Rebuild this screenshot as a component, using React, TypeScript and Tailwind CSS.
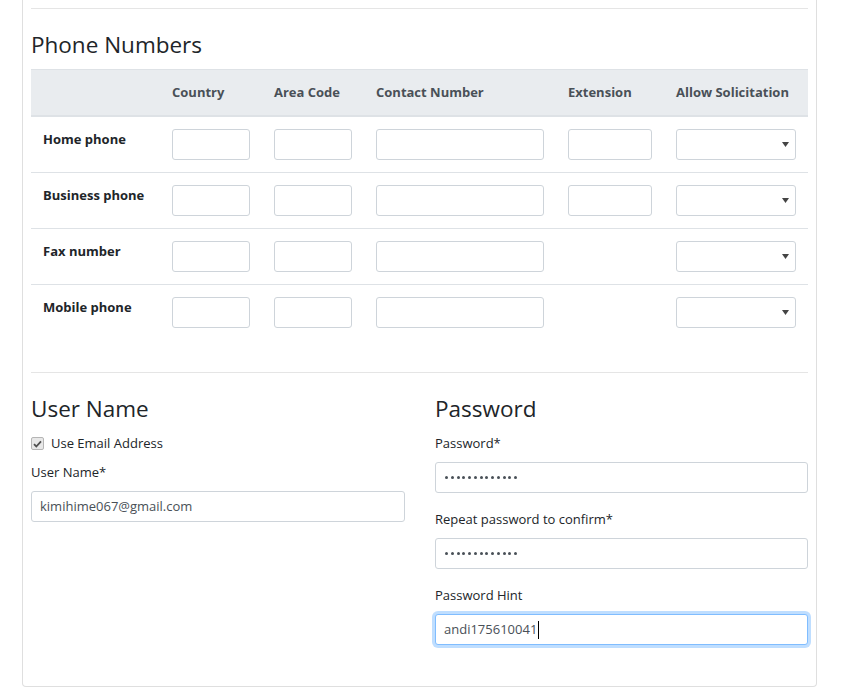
import React from "react";

const FONT = "font-['Open_Sans','Noto_Sans',sans-serif]";

const COLS = "grid grid-cols-[129px_102px_102px_192px_108px_144px]";

const ROWS = [
  { label: "Home phone", ext: true },
  { label: "Business phone", ext: true },
  { label: "Fax number", ext: false },
  { label: "Mobile phone", ext: false },
];

function Box({ className = "" }: { className?: string }) {
  return <div className={`h-[31px] rounded-[3px] border border-[#ced4da] bg-white ${className}`} />;
}

function Select() {
  return (
    <div className="flex h-[31px] w-[120px] items-center justify-end rounded-[3px] border border-[#ced4da] bg-white pr-[6px]">
      <svg width="7" height="5" viewBox="0 0 7 5">
        <path d="M0 0h7L3.5 5z" fill="#444" />
      </svg>
    </div>
  );
}

function Dots() {
  return (
    <div className="flex h-[31px] items-center gap-[2.75px] rounded-[3px] border border-[#ced4da] bg-white px-[9px]">
      {Array.from({ length: 13 }).map((_, i) => (
        <span key={i} className="h-[3px] w-[3px] rounded-full bg-[#495057]" />
      ))}
    </div>
  );
}

function Label({ children }: { children: React.ReactNode }) {
  return <div className="mb-2 h-[21px] leading-[21px] text-[#212529]">{children}</div>;
}

export default function App() {
  return (
    <div className={`min-h-[692px] bg-white text-[13px] ${FONT}`}>
      <div className="ml-[22px] w-[795px] rounded-b border border-t-0 border-[#dfdfdf] px-2 pt-2 pb-[41px]">
        <hr className="border-t border-[#e5e5e5]" />
        <h4 className="mt-[23px] mb-2 h-[29px] text-[22.5px] leading-[26px] text-[#212529]">Phone Numbers</h4>

        {/* table */}
        <div className="text-[#212529]">
          <div className={`${COLS} border-t border-b-2 border-[#dee2e6] bg-[#e9ecef] font-bold text-[#495057]`}>
            <div className="p-3" />
            <div className="p-3 leading-[21px]">Country</div>
            <div className="p-3 leading-[21px]">Area Code</div>
            <div className="p-3 leading-[21px]">Contact Number</div>
            <div className="p-3 leading-[21px]">Extension</div>
            <div className="whitespace-nowrap p-3 leading-[21px]">Allow Solicitation</div>
          </div>
          {ROWS.map((r, i) => (
            <div key={r.label} className={`${COLS} ${i > 0 ? "border-t border-[#dee2e6]" : ""}`}>
              <div className="whitespace-nowrap p-3 font-bold leading-[21px]">{r.label}</div>
              <div className="p-3"><Box className="w-[78px]" /></div>
              <div className="p-3"><Box className="w-[78px]" /></div>
              <div className="p-3"><Box className="w-[168px]" /></div>
              <div className="p-3">{r.ext && <Box className="w-[84px]" />}</div>
              <div className="p-3"><Select /></div>
            </div>
          ))}
        </div>

        <hr className="mt-8 border-t border-[#e5e5e5]" />

        <div className="mt-[23px] grid grid-cols-[374px_373px] gap-[30px] text-[#212529]">
          <div>
            <h4 className="mb-2 h-[29px] text-[22.5px] leading-[26px]">User Name</h4>
            <div className="mb-2 flex h-[21px] items-center gap-[7px] leading-[21px]">
              <span className="flex h-[13px] w-[13px] items-center justify-center rounded-[2px] border border-[#b5b5b5] bg-[#e8e8e8]">
                <svg width="9" height="8" viewBox="0 0 9 8">
                  <path d="M1 4.2l2.3 2.3L8 1.3" fill="none" stroke="#505050" strokeWidth="1.8" />
                </svg>
              </span>
              <span>Use Email Address</span>
            </div>
            <Label>User Name*</Label>
            <div className="flex h-[31px] items-center rounded-[3px] border border-[#ced4da] bg-white px-2 text-[#495057]">
              kimihime067@gmail.com
            </div>
          </div>
          <div>
            <h4 className="mb-2 h-[29px] text-[22.5px] leading-[26px]">Password</h4>
            <Label>Password*</Label>
            <Dots />
            <div className="h-4" />
            <Label>Repeat password to confirm*</Label>
            <Dots />
            <div className="h-4" />
            <Label>Password Hint</Label>
            <div className="flex h-[31px] items-center rounded-[3px] border border-[#80bdff] bg-white px-2 text-[#495057] shadow-[0_0_0_3px_rgba(0,123,255,0.25)]">
              andi175610041
              <span className="ml-px h-[18px] w-px bg-black" />
            </div>
          </div>
        </div>
      </div>
    </div>
  );
}
